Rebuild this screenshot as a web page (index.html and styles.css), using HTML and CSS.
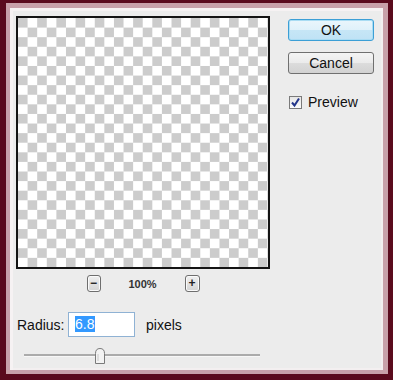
FILE: index.html
```html
<!DOCTYPE html>
<html>
<head>
<meta charset="utf-8">
<link rel="stylesheet" href="styles.css">
</head>
<body>
<div class="frame">
  <div class="dialog">
    <div class="left">
      <div class="canvas"></div>
      <div class="zoom">
        <span class="zbtn">&minus;</span>
        <span class="pct">100%</span>
        <span class="zbtn plus">+</span>
      </div>
      <div class="radius">
        <span class="label">Radius:</span>
        <div class="input"><span class="sel">6.8</span></div>
        <span class="unit">pixels</span>
      </div>
      <div class="slider">
        <div class="track"></div>
        <svg class="thumb" style="left:78px" width="12" height="16" viewBox="0 0 12 16">
          <path d="M1.5 15.5 V5.5 Q1.5 0.5 6 0.5 Q10.5 0.5 10.5 5.5 V15.5 Z" fill="#f3f3f3" stroke="#7a7a7a"/>
          <path d="M4 13 V6" stroke="#c8c8c8"/>
        </svg>
      </div>
    </div>
    <div class="right">
      <button class="btn ok">OK</button>
      <button class="btn">Cancel</button>
      <label class="check">
        <span class="box">
          <svg width="11" height="11" viewBox="0 0 11 11"><path d="M2 5.5 L4.5 8.5 L9 1.5" fill="none" stroke="#23358a" stroke-width="2"/></svg>
        </span>
        <span>Preview</span>
      </label>
    </div>
  </div>
</div>
</body>
</html>
```
FILE: styles.css
```css
html, body {
  margin: 0;
  padding: 0;
}
body {
  width: 393px;
  height: 380px;
  overflow: hidden;
  background: #5a0a1d;
  font-family: "Liberation Sans", Arial, sans-serif;
  color: #111;
}
.frame {
  margin: 3px 5px 6px 6px;
  border-style: solid;
  border-color: #c8a0a9;
  border-width: 5px 5px 4px 4px;
  height: 362px;
  box-sizing: content-box;
}
.dialog {
  height: 100%;
  box-sizing: border-box;
  background: #ececec;
  box-shadow: inset 3px 3px 0 #f6f2f3, inset -2px -2px 0 #f3eff0;
  display: flex;
  padding: 8px 0 0 6px;
}
.left {
  width: 254px;
  display: flex;
  flex-direction: column;
}
.canvas {
  width: 254px;
  height: 253px;
  box-sizing: border-box;
  border: 2px solid #141414;
  background-color: #fff;
  background-image: conic-gradient(#fff 25%, #cccccc 0 50%, #fff 0 75%, #cccccc 0);
  background-size: 19.2px 19.2px;
  background-position: 0 0;
}
.zoom {
  margin-top: 6px;
  display: flex;
  justify-content: center;
  align-items: center;
  gap: 27px;
  height: 17px;
}
.zbtn {
  width: 14px;
  height: 17px;
  box-sizing: border-box;
  border: 1px solid #6e6e6e;
  border-radius: 3px;
  background: linear-gradient(#f0f0f0, #d4d4d4);
  box-shadow: inset 0 0 0 1px #fafafa;
  font-size: 12px;
  font-weight: bold;
  line-height: 14px;
  text-align: center;
  color: #222;
}
.zbtn.plus {
  width: 15px;
}
.pct {
  font-size: 11px;
  font-weight: bold;
  color: #333;
  width: 30px;
  text-align: center;
}
.radius {
  margin-top: 20px;
  display: flex;
  align-items: center;
  height: 25px;
  padding-left: 1px;
  font-size: 14px;
}
.label {
  width: 51px;
}
.input {
  width: 67px;
  height: 25px;
  box-sizing: border-box;
  border: 1px solid #8fb2d4;
  background: #fff;
  padding: 3px 0 0 6px;
}
.sel {
  display: inline-block;
  background: #3399ff;
  color: #fff;
  height: 16px;
  line-height: 16px;
  padding-right: 1px;
}
.unit {
  margin-left: 11px;
}
.slider {
  position: relative;
  margin-top: 11px;
  height: 16px;
}
.track {
  position: absolute;
  left: 8px;
  top: 6px;
  width: 236px;
  height: 2px;
  background: #ababab;
  border-bottom: 1px solid #f7f7f7;
}
.thumb {
  position: absolute;
  top: 0;
}
.right {
  margin-left: 18px;
  padding-top: 3px;
  display: flex;
  flex-direction: column;
  width: 86px;
}
.btn {
  width: 86px;
  height: 22px;
  margin: 0;
  padding: 0;
  border: 1px solid #707070;
  border-radius: 3px;
  background: linear-gradient(#f4f4f4 0%, #ebebeb 50%, #dcdcdc 51%, #d2d2d2 100%);
  font-family: "Liberation Sans", Arial, sans-serif;
  font-size: 14px;
  color: #111;
  line-height: 20px;
}
.btn + .btn {
  margin-top: 11px;
}
.btn.ok {
  border-color: #3c9fd6;
  box-shadow: inset 0 0 0 1px #a9dcf3;
  background: linear-gradient(#eaf6fc 0%, #dff1fa 50%, #c6e6f6 51%, #bfe2f5 100%);
}
.check {
  margin-top: 20px;
  display: flex;
  align-items: center;
  gap: 6px;
  font-size: 14px;
  padding-left: 1px;
}
.box {
  width: 13px;
  height: 13px;
  box-sizing: border-box;
  border: 1px solid #7a7a7a;
  background: linear-gradient(#e6e6e6, #fbfbfb);
  display: flex;
  align-items: center;
  justify-content: center;
}
.box svg {
  display: block;
}
```
